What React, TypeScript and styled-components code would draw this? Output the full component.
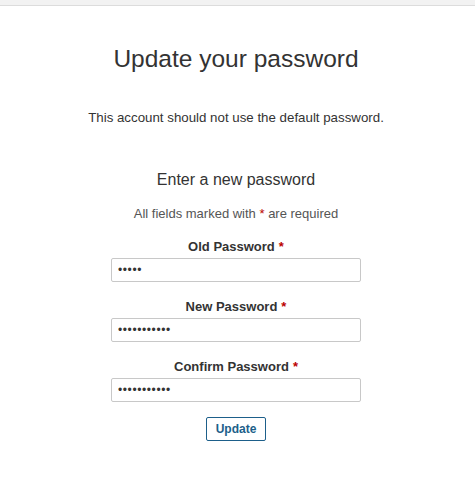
import React from 'react';
import styled, { createGlobalStyle } from 'styled-components';

const GlobalStyle = createGlobalStyle`
  html, body {
    margin: 0;
    padding: 0;
    background: #fff;
    font-family: "Liberation Sans", Arial, Helvetica, sans-serif;
    color: #333;
  }
`;

const TopBar = styled.div`
  height: 5px;
  background: #f2f2f2;
  border-bottom: 1px solid #dcdcdc;
`;

const Page = styled.main`
  display: flex;
  flex-direction: column;
  align-items: center;
  padding-top: 39px;
  padding-right: 3px;
`;

const Title = styled.h1`
  margin: 0;
  font-size: 24.5px;
  line-height: 28px;
  font-weight: normal;
  color: #333;
`;

const Notice = styled.p`
  margin: 37px 0 0;
  font-size: 13.3px;
  line-height: 16px;
  color: #333;
`;

const SubTitle = styled.h2`
  margin: 44px 0 0;
  font-size: 16px;
  line-height: 19px;
  font-weight: normal;
  color: #333;
`;

const Hint = styled.p`
  margin: 17px 0 0;
  font-size: 13px;
  line-height: 16px;
  color: #555;
`;

const Star = styled.span`
  color: #b00;
`;

const Form = styled.form`
  display: flex;
  flex-direction: column;
  align-items: center;
  width: 250px;
  margin-top: 17px;
  gap: 17px;
`;

const Field = styled.div`
  display: flex;
  flex-direction: column;
  align-items: center;
  gap: 3px;
  width: 100%;
`;

const Label = styled.label`
  font-size: 13px;
  line-height: 16px;
  font-weight: bold;
  color: #333;

  ${Star} {
    margin-left: 4px;
  }
`;

const Input = styled.input`
  box-sizing: border-box;
  width: 250px;
  height: 24px;
  padding: 0 6px;
  border: 1px solid #c8c8c8;
  border-radius: 2px;
  font-family: "Liberation Sans", Arial, sans-serif;
  font-size: 12px;
  letter-spacing: 0.6px;
  color: #333;
  background: #fff;
  outline: none;
`;

const Button = styled.button`
  box-sizing: border-box;
  margin-top: -2px;
  height: 24px;
  padding: 0 9px;
  background: #fff;
  border: 1px solid #1d5f8a;
  border-radius: 2px;
  color: #1d5f8a;
  font-family: "Liberation Sans", Arial, sans-serif;
  font-size: 12px;
  font-weight: bold;
  cursor: pointer;
`;

const fields = [
  { id: 'old', label: 'Old Password', value: '12345' },
  { id: 'new', label: 'New Password', value: '12345678901' },
  { id: 'confirm', label: 'Confirm Password', value: '12345678901' },
];

export default function App() {
  return (
    <>
      <GlobalStyle />
      <TopBar />
      <Page>
        <Title>Update your password</Title>
        <Notice>This account should not use the default password.</Notice>
        <SubTitle>Enter a new password</SubTitle>
        <Hint>
          All fields marked with <Star>*</Star> are required
        </Hint>
        <Form onSubmit={(e) => e.preventDefault()}>
          {fields.map((f) => (
            <Field key={f.id}>
              <Label htmlFor={f.id}>
                {f.label}
                <Star>*</Star>
              </Label>
              <Input id={f.id} type="password" defaultValue={f.value} />
            </Field>
          ))}
          <Button type="submit">Update</Button>
        </Form>
      </Page>
    </>
  );
}
